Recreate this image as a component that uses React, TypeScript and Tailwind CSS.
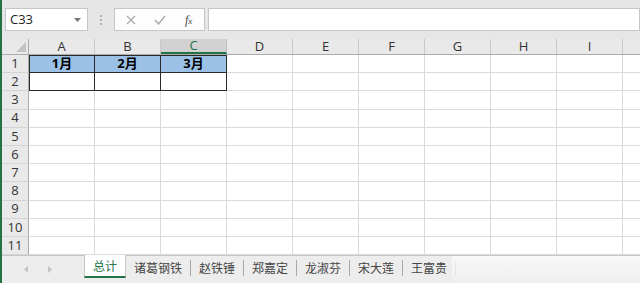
import React from 'react';

const cols = ['A', 'B', 'C', 'D', 'E', 'F', 'G', 'H', 'I', ''];
const rows = [1, 2, 3, 4, 5, 6, 7, 8, 9, 10, 11];
const sheets = ['总计', '诸葛钢铁', '赵铁锤', '郑嘉定', '龙淑芬', '宋大莲', '王富贵'];

const Cell = ({ r, c }: { r: number; c: number }) => {
  const boxed = r <= 2 && c <= 2;
  const fill = r === 1 && c <= 2;
  return (
    <div
      className={`w-[66px] shrink-0 h-full flex items-center justify-center text-[13px] font-bold text-black ${
        boxed ? 'border-r border-b border-[#2a2a2a]' : 'border-r border-b border-[#dadada]'
      } ${fill ? 'bg-[#9bc2e6]' : 'bg-white'} ${boxed && r === 1 ? 'border-t border-t-[#2a2a2a]' : ''} ${boxed && c === 0 ? 'border-l border-l-[#2a2a2a]' : ''}`}
    >
      {fill ? `${c + 1}月` : ''}
    </div>
  );
};

export default function App() {
  return (
    <div
      className="w-[640px] h-[283px] overflow-hidden bg-[#e6e6e6] border-l-2 border-[#217346] flex flex-col"
      style={{ fontFamily: '"Open Sans", "Noto Sans CJK SC", sans-serif' }}
    >
      {/* formula bar */}
      <div className="h-[39px] shrink-0 flex items-start pt-[8px]">
        <div className="ml-[3px] w-[83px] h-[23px] bg-white border border-[#c6c6c6] flex items-center justify-between pl-[4px] pr-[6px]">
          <span className="text-[13px] text-[#222]">C33</span>
          <svg width="7" height="4" viewBox="0 0 7 4"><path d="M0 0h7L3.5 4z" fill="#777" /></svg>
        </div>
        <div className="w-[26px] h-[23px] flex flex-col items-center justify-center gap-[2px]">
          <span className="w-[2px] h-[2px] bg-[#b0b0b0]" />
          <span className="w-[2px] h-[2px] bg-[#b0b0b0]" />
          <span className="w-[2px] h-[2px] bg-[#b0b0b0]" />
        </div>
        <div className="w-[91px] h-[23px] bg-[#fdfdfd] border border-[#c6c6c6] flex items-center">
          <svg className="ml-[11px]" width="10" height="10" viewBox="0 0 10 10"><path d="M1 1l8 8M9 1l-8 8" stroke="#a8a8a8" strokeWidth="1.2" /></svg>
          <svg className="ml-[18px]" width="12" height="10" viewBox="0 0 12 10"><path d="M1 5l3.5 4L11 1" stroke="#a8a8a8" strokeWidth="1.4" fill="none" /></svg>
          <span className="ml-[19px] text-[12px] italic text-[#444]" style={{ fontFamily: '"Liberation Serif", serif' }}>
            f<span className="text-[9px]">x</span>
          </span>
        </div>
        <div className="ml-[3px] flex-1 h-[23px] bg-white border border-[#c6c6c6]" />
      </div>

      {/* column headers */}
      <div className="h-[16px] shrink-0 flex bg-[#e9e9e9] border-b border-[#ababab]">
        <div className="w-[27px] shrink-0 border-r border-[#ababab] flex items-end justify-end pr-[2px] pb-[2px]">
          <svg width="10" height="10" viewBox="0 0 10 10"><path d="M10 0v10H0z" fill="#c4c4c4" /></svg>
        </div>
        {cols.map((c, i) => (
          <div
            key={i}
            className={`w-[66px] shrink-0 flex items-center justify-center text-[13px] leading-none ${
              i === 2 ? 'bg-[#d2d2d2] text-[#217346] border-b-2 border-[#217346] border-r border-r-[#bdbdbd]' : 'text-[#333] border-r border-[#c8c8c8]'
            }`}
          >
            {c}
          </div>
        ))}
      </div>

      {/* rows */}
      <div className="flex flex-col bg-white">
        {rows.map((r) => (
          <div key={r} className="h-[18.2px] flex">
            <div className="w-[27px] shrink-0 bg-[#e9e9e9] border-r border-[#ababab] border-b border-b-[#d4d4d4] flex items-center justify-center text-[13px] text-[#333]">
              {r}
            </div>
            {cols.map((_, ci) => (
              <Cell key={ci} r={r} c={ci} />
            ))}
          </div>
        ))}
      </div>

      {/* sheet tabs */}
      <div className="flex-1 flex items-stretch bg-[#ededed] border-t border-[#c6c6c6] relative">
        <div className="w-[82px] shrink-0 flex items-center pl-[22px] gap-[20px]">
          <svg width="4" height="7" viewBox="0 0 4 7"><path d="M4 0v7L0 3.5z" fill="#c4c4c4" /></svg>
          <svg width="4" height="7" viewBox="0 0 4 7"><path d="M0 0v7l4-3.5z" fill="#c4c4c4" /></svg>
        </div>
        <div className="flex items-start" style={{ fontFamily: '"Noto Sans CJK SC", sans-serif' }}>
          {sheets.map((s, i) =>
            i === 0 ? (
              <div key={s} className="h-[23px] -mt-[1px] px-[8px] bg-white border-x border-[#c6c6c6] border-b-2 border-b-[#217346] flex items-center text-[12px] text-[#217346]">
                {s}
              </div>
            ) : (
              <div key={s} className="h-[23px] flex items-center">
                <div className="px-[8px] text-[12px] text-[#444]">{s}</div>
                <div className="w-px h-[16px] bg-[#a8a8a8]" />
              </div>
            )
          )}
        </div>
        <div className="absolute right-0 top-0 bottom-0 w-[188px] bg-gradient-to-b from-[#fafafa] to-[#f0f0f0] opacity-80" />
      </div>
    </div>
  );
}
